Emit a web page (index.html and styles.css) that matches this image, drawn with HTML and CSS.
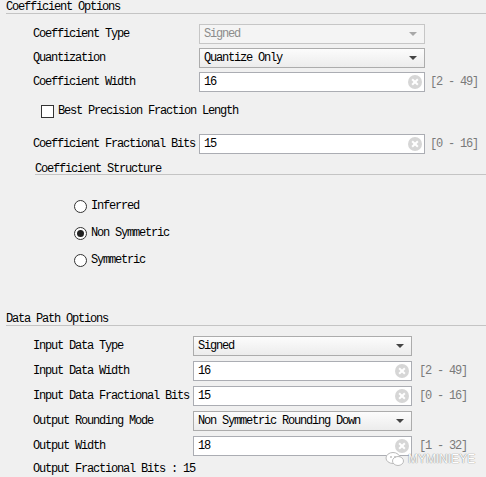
FILE: index.html
```html
<!DOCTYPE html>
<html lang="en">
<head>
<meta charset="UTF-8">
<title>Filter Options</title>
<link rel="stylesheet" href="styles.css">
</head>
<body>
<div class="panel">
  <div class="group-title">Coefficient Options</div>

  <div class="rows rows-coef">
    <div class="row">
      <span class="label">Coefficient Type</span>
      <div class="combo disabled"><span>Signed</span><i class="arrow"></i></div>
    </div>
    <div class="row">
      <span class="label">Quantization</span>
      <div class="combo"><span>Quantize Only</span><i class="arrow"></i></div>
    </div>
    <div class="row">
      <span class="label">Coefficient Width</span>
      <div class="field"><span>16</span><i class="clear"></i></div>
      <span class="range">[2 - 49]</span>
    </div>
  </div>

  <label class="check"><i class="box"></i>Best Precision Fraction Length</label>

  <div class="rows rows-coef frac">
    <div class="row">
      <span class="label">Coefficient Fractional Bits</span>
      <div class="field"><span>15</span><i class="clear"></i></div>
      <span class="range">[0 - 16]</span>
    </div>
  </div>

  <div class="sub-title">Coefficient Structure</div>

  <div class="radios">
    <label class="radio"><i class="dot"></i>Inferred</label>
    <label class="radio"><i class="dot on"></i>Non Symmetric</label>
    <label class="radio"><i class="dot"></i>Symmetric</label>
  </div>

  <div class="group-title data">Data Path Options</div>

  <div class="rows rows-data">
    <div class="row">
      <span class="label">Input Data Type</span>
      <div class="combo"><span>Signed</span><i class="arrow"></i></div>
    </div>
    <div class="row">
      <span class="label">Input Data Width</span>
      <div class="field"><span>16</span><i class="clear"></i></div>
      <span class="range">[2 - 49]</span>
    </div>
    <div class="row">
      <span class="label">Input Data Fractional Bits</span>
      <div class="field"><span>15</span><i class="clear"></i></div>
      <span class="range">[0 - 16]</span>
    </div>
    <div class="row">
      <span class="label">Output Rounding Mode</span>
      <div class="combo"><span>Non Symmetric Rounding Down</span><i class="arrow"></i></div>
    </div>
    <div class="row">
      <span class="label">Output Width</span>
      <div class="field"><span>18</span><i class="clear"></i></div>
      <span class="range">[1 - 32]</span>
    </div>
  </div>

  <div class="note">Output Fractional Bits : 15</div>

  <div class="mark">
    <svg width="20" height="16" viewBox="0 0 20 16">
      <ellipse cx="8" cy="7" rx="7" ry="5.5" fill="#fff" stroke="#bbb"/>
      <ellipse cx="13" cy="10" rx="5.5" ry="4.5" fill="#fff" stroke="#bbb"/>
      <circle cx="6" cy="6" r="0.9" fill="#bbb"/>
      <circle cx="10" cy="6" r="0.9" fill="#bbb"/>
    </svg>
    <span>MYMINIEYE</span>
  </div>
</div>
</body>
</html>
```

FILE: styles.css
```css
body{margin:0;background:#f0f0f0;font-family:"Liberation Mono","DejaVu Sans Mono",monospace;font-size:12px;letter-spacing:-1.2px;color:#000}
.panel{position:relative;width:486px;height:477px;overflow:hidden}

/* group headings with a rule underneath */
.group-title{margin-left:6px;height:13px;line-height:14px;border-bottom:1px solid #c4c4c4}
.group-title.data{margin-top:45px}
.sub-title{margin:10px 0 0 35px;height:10px;line-height:10px;border-bottom:1px solid #c4c4c4}

/* form rows */
.rows{display:flex;flex-direction:column;gap:4px;padding-left:33px}
.rows-coef{margin-top:10px}
.rows-coef .label{width:166px}
.rows-coef .combo,.rows-coef .field{width:226px}
.rows-coef .range{margin-left:5px}
.rows-coef.frac{margin-top:16px}
.rows-data{margin-top:10px;gap:5px}
.rows-data .label{width:160px}
.rows-data .combo,.rows-data .field{width:219px}
.rows-data .range{margin-left:7px}

.row{display:flex;align-items:center;height:20px}
.label{flex:none;white-space:nowrap}

.combo,.field{box-sizing:border-box;height:20px;display:flex;align-items:center;padding:0 4px;flex:none}
.combo{border:1px solid #acacac;background:linear-gradient(#fcfcfc,#ececec)}
.combo span{flex:1;white-space:nowrap}
.combo.disabled{color:#8c8c8c;border-color:#c6c6c6;background:#f4f4f4}
.arrow{width:0;height:0;border-left:4px solid transparent;border-right:4px solid transparent;border-top:4px solid #444;margin-right:3px}
.combo.disabled .arrow{border-top-color:#a8a8a8}

.field{border:1px solid #abadb3;background:#fff;padding-right:2px}
.field span{flex:1}
.clear{position:relative;width:14px;height:14px;border-radius:50%;background:#d6d6d6}
.clear::before,.clear::after{content:"";position:absolute;left:3px;top:6px;width:8px;height:2px;background:#fff;transform:rotate(45deg)}
.clear::after{transform:rotate(-45deg)}

.range{color:#7a7a7a;white-space:nowrap}

/* check box and radio buttons */
.check{display:flex;align-items:center;margin:12px 0 0 41px;height:14px;gap:4px}
.box{box-sizing:border-box;width:13px;height:13px;border:1px solid #333;background:#fff}

.radios{display:flex;flex-direction:column;gap:13px;margin:24px 0 0 74px}
.radio{display:flex;align-items:center;height:14px;gap:4px}
.dot{box-sizing:border-box;width:13px;height:13px;border:1px solid #333;border-radius:50%;background:#fff;display:flex;align-items:center;justify-content:center}
.dot.on::after{content:"";width:7px;height:7px;border-radius:50%;background:#222}

.note{margin:6px 0 0 33px;line-height:14px}

/* watermark in the corner */
.mark{position:absolute;left:385px;top:451px;display:flex;align-items:center;gap:3px}
.mark span{font-family:"Liberation Sans",Arial,sans-serif;font-size:12px;line-height:12px;letter-spacing:0;color:#fff;text-shadow:0 0 1px #888,0 0 1px #888}
```
